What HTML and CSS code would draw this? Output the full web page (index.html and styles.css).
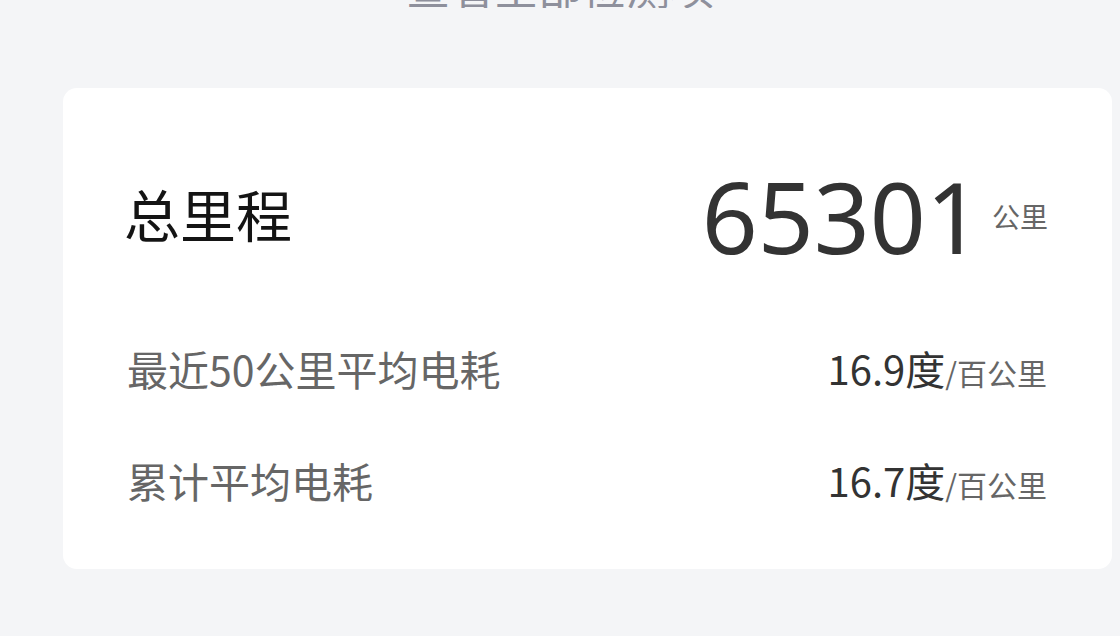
FILE: index.html
```html
<!DOCTYPE html>
<html>
  <head>
    <meta http-equiv="content-type" content="text/html; charset=UTF-8">
    <title>里程与电耗</title>
    <meta name="viewport" content="width=device-width">
    <link rel="stylesheet" href="styles.css">
  </head>
  <body>
    <div class="moreLink"><span>查看全部检测项</span></div>
    <section class="card">
      <div class="totalRow">
        <h1 class="totalLabel">总里程</h1>
        <div class="totalValue">
          <span class="bigNumber">65301</span>
          <span class="bigUnit">公里</span>
        </div>
      </div>
      <div class="statRow">
        <span class="statLabel">最近50公里平均电耗</span>
        <span class="statValue">16.9度<small>/百公里</small></span>
      </div>
      <div class="statRow">
        <span class="statLabel">累计平均电耗</span>
        <span class="statValue">16.7度<small>/百公里</small></span>
      </div>
    </section>
  </body>
</html>
```

FILE: styles.css
```css
:root {
  --background: #f4f5f7;
  --card: #ffffff;
  --title: #141414;
  --number: #333333;
  --label: #666666;
  --muted: #8e909c;
}
body {
  margin: 0;
  background-color: var(--background);
  font-family: "Noto Sans CJK SC", "Noto Sans", sans-serif;
}
.moreLink {
  height: 8px;
  overflow: hidden;
  display: flex;
  align-items: flex-end;
  justify-content: center;
}
.moreLink span {
  font-size: 44px;
  line-height: 44px;
  color: var(--muted);
}
.card {
  margin: 80px 8px 0 63px;
  background-color: var(--card);
  border-radius: 14px;
  padding: 52px 64px 33px;
}
.totalRow {
  height: 144px;
  display: flex;
  align-items: center;
  justify-content: space-between;
}
.totalLabel {
  margin: 0;
  font-size: 56px;
  font-weight: 400;
  color: var(--title);
  margin-left: -3px;
}
.totalValue {
  display: flex;
  align-items: center;
  gap: 10px;
}
.bigNumber {
  font-family: "Noto Sans", "Noto Sans CJK SC", sans-serif;
  font-size: 98px;
  line-height: 1;
  color: var(--number);
  margin-top: 8px;
}
.bigUnit {
  font-size: 28px;
  color: var(--label);
  margin-top: 8px;
}
.statRow {
  height: 112px;
  display: flex;
  align-items: center;
  justify-content: space-between;
}
.totalRow + .statRow { margin-top: 28px; }
.statLabel {
  font-size: 41px;
  color: var(--label);
}
.statValue {
  font-size: 40px;
  color: var(--number);
  margin-right: 1px;
}
.statValue small {
  font-size: 30px;
  color: var(--label);
}
```
